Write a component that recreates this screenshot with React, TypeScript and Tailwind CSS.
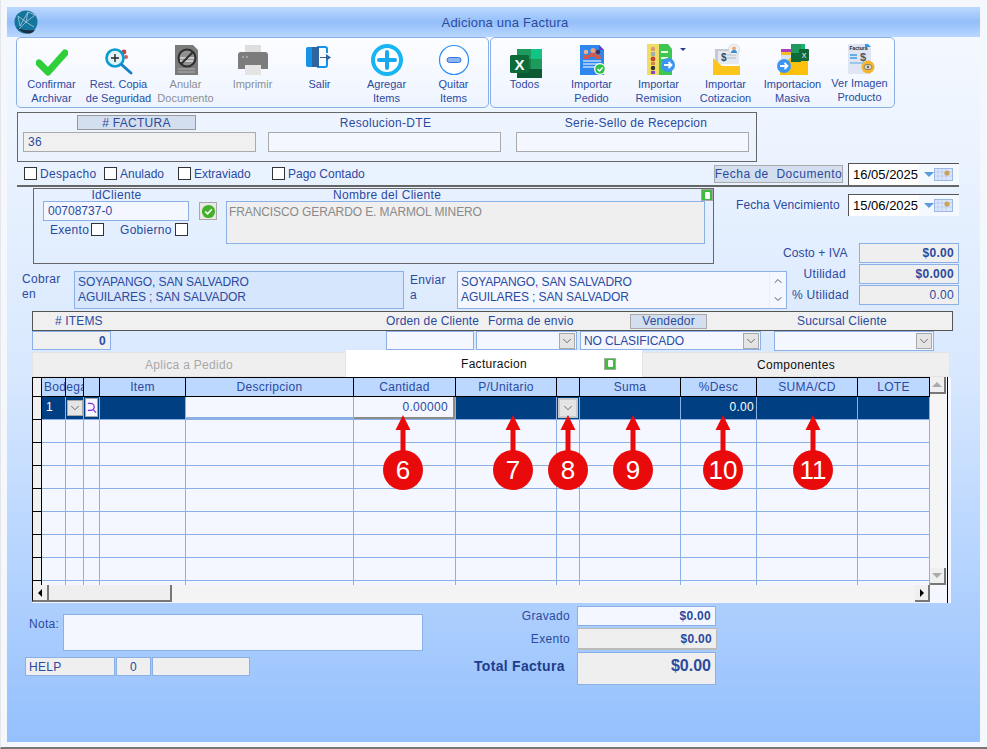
import type { ReactNode } from "react"
import { ChevronDown, ChevronUp } from "lucide-react"

const border = "border border-[#8ab0e6]"

const IconCheck = () => (
  <svg viewBox="0 0 32 32" className="h-8 w-8">
    <path d="M3 19l9 9L29 9" fill="none" stroke="#2fcf3a" strokeWidth="7" strokeLinecap="round" strokeLinejoin="round" />
  </svg>
)

const IconRestore = () => (
  <svg viewBox="0 0 32 32" className="h-8 w-8">
    <circle cx="21" cy="8" r="2.4" fill="#c2453f" />
    <circle cx="23" cy="13" r="2" fill="#e0524a" />
    <circle cx="12" cy="14" r="8.5" fill="#dff2f8" stroke="#0a9ccf" strokeWidth="2.6" />
    <path d="M12 10v8M8 14h8" stroke="#222" strokeWidth="1.4" />
    <path d="M19 21l9 8" stroke="#1180c8" strokeWidth="3" strokeLinecap="round" />
  </svg>
)

const IconVoid = () => (
  <svg viewBox="0 0 32 32" className="h-8 w-8">
    <path d="M5 1h18l5 5v25H5z" fill="#7b7b7b" />
    <path d="M8 25h17M8 28h17" stroke="#b5b5b5" strokeWidth="1" />
    <circle cx="17" cy="14" r="8.5" fill="#909090" stroke="#2e2e2e" strokeWidth="2" />
    <path d="M10 14h14M10 17h13" stroke="#dcdcdc" strokeWidth="1.6" />
    <path d="M11 20l12-12" stroke="#2e2e2e" strokeWidth="2" />
  </svg>
)

const IconPrint = () => (
  <svg viewBox="0 0 32 32" className="h-8 w-8">
    <rect x="8" y="1" width="16" height="8" fill="#dedede" />
    <path d="M1 11a3 3 0 013-3h24a3 3 0 013 3v14H1z" fill="#7c7c7c" />
    <circle cx="6" cy="13" r="1.2" fill="#a5a5a5" />
    <circle cx="10" cy="13" r="1.2" fill="#a5a5a5" />
    <rect x="8" y="21" width="16" height="10" fill="#e4e4e4" />
  </svg>
)

const IconExit = () => (
  <svg viewBox="0 0 32 32" className="h-8 w-8">
    <path d="M13 3h8a2 2 0 012 2v4M23 16v5a2 2 0 01-2 2h-8" fill="none" stroke="#1593e8" strokeWidth="2" />
    <path d="M2 5a2 2 0 012-2h9v20H4a2 2 0 01-2-2z" fill="#1593e8" />
    <path d="M8 3h7v20H8z" fill="#2f659c" />
    <path d="M16 13h6V10l5 3.500-5 3.500v-3h-6z" fill="#2f659c" />
  </svg>
)

const IconPlus = () => (
  <svg viewBox="0 0 32 32" className="h-8 w-8">
    <circle cx="16" cy="16" r="14" fill="#fff" stroke="#18b4f4" strokeWidth="4" />
    <path d="M16 8v16M8 16h16" stroke="#18a8f0" strokeWidth="4" strokeLinecap="round" />
  </svg>
)

const IconMinus = () => (
  <svg viewBox="0 0 32 32" className="h-8 w-8">
    <circle cx="16" cy="16" r="14.500" fill="#fff" stroke="#2f8ff0" strokeWidth="1.2" />
    <rect x="9" y="13.500" width="14" height="5" rx="2.500" fill="#8db6ee" stroke="#2f74d8" strokeWidth="1" />
  </svg>
)

const IconExcel = () => (
  <svg viewBox="0 0 32 34" className="h-[34px] w-8 overflow-visible">
    <path d="M8 5h14v10H8z" fill="#1e9a5c" />
    <path d="M22 5h11v10H22z" fill="#12c483" />
    <path d="M8 15h14v10H8z" fill="#117e45" />
    <path d="M22 15h11v10H22z" fill="#1e9a5c" />
    <path d="M8 25h25v9H8z" fill="#0b5a32" />
    <rect x="1" y="11" width="19" height="18" rx="1.500" fill="#0d6b3a" />
    <text x="10.500" y="26" textAnchor="middle" fontSize="15" fontWeight="700" fill="#fff" fontFamily="Liberation Sans">X</text>
  </svg>
)

const IconOrder = () => (
  <svg viewBox="0 0 32 32" className="h-8 w-8">
    <path d="M4 1h19l5 5v25H4z" fill="#2f86ee" />
    <path d="M23 1l5 5h-5z" fill="#6a3bc0" />
    <circle cx="10" cy="8" r="2.300" fill="#e8b48f" />
    <circle cx="17" cy="6.500" r="2.500" fill="#e8a27f" />
    <circle cx="22" cy="8" r="2.300" fill="#3b3560" />
    <path d="M7 15v-4h6v4zM13.500 13v-4h7v4zM19.500 15v-4h5v4z" fill="#cf5a4e" />
    <path d="M7 17h18M7 20h18M7 23h12" stroke="#bcdcff" strokeWidth="1.300" />
    <circle cx="24" cy="25" r="6" fill="#fff" />
    <circle cx="24" cy="25" r="4.800" fill="#2dc24a" />
    <path d="M21.500 25l2 2 3.200-3.500" fill="none" stroke="#fff" strokeWidth="1.500" />
  </svg>
)

const IconRemission = () => (
  <svg viewBox="0 0 32 32" className="h-8 w-8 overflow-visible">
    <rect x="4" y="0" width="12" height="31" fill="#f0dc66" />
    <path d="M16 0h9l4 5v26H16z" fill="#3ec552" />
    <circle cx="10" cy="5" r="2.200" fill="#d99a78" />
    <rect x="8" y="8" width="4" height="4" fill="#9cb2b0" />
    <circle cx="10" cy="15" r="2.400" fill="#c4453a" />
    <rect x="8" y="18" width="4" height="3" fill="#d28a3f" />
    <circle cx="10" cy="24" r="2.200" fill="#333" />
    <rect x="8" y="27" width="4" height="3" fill="#7d4cc0" />
    <path d="M18 7h7v2h-7zM18 13h7v2h-7zM18 19h4v2h-4z" fill="#eaf8e2" />
    <circle cx="25" cy="21" r="7" fill="#3a96f2" />
    <path d="M21 21h7M25.500 18l3 3-3 3" fill="none" stroke="#fff" strokeWidth="1.800" />
    <path d="M37 4h6l-3 3z" fill="#1f3d8c" />
  </svg>
)

const IconQuote = () => (
  <svg viewBox="0 0 32 32" className="h-8 w-8">
    <rect x="5" y="5" width="23" height="15" fill="#c4c9d4" />
    <rect x="8" y="7" width="21" height="13" fill="#e4e8f0" />
    <text x="11" y="17" fontSize="10" fontWeight="700" fill="#3a4a5a" fontFamily="Liberation Sans">$</text>
    <path d="M17 11h9M17 14h9" stroke="#b4bbc8" strokeWidth="1" />
    <path d="M3 14l9 8h18v9H3z" fill="#fdc41c" />
    <circle cx="24" cy="5.500" r="5.500" fill="#f2f2f2" stroke="#c9c9c9" strokeWidth=".6" />
    <circle cx="24" cy="4.500" r="2" fill="#e8a882" />
    <path d="M21 9a3 3 0 016 0z" fill="#2f8fd0" />
  </svg>
)

const IconBulk = () => (
  <svg viewBox="0 0 32 32" className="h-8 w-8">
    <rect x="4" y="5" width="14" height="3" fill="#b23ab8" />
    <rect x="4" y="8" width="14" height="3" fill="#f0c020" />
    <rect x="4" y="11" width="14" height="9" fill="#d8e2f0" />
    <path d="M3 16h8l2-2h18v17H3z" fill="#fdc00c" />
    <path d="M14 0h10v9H14z" fill="#1e9a5c" />
    <path d="M14 9h10v9H14z" fill="#0d6b3a" />
    <path d="M24 0h4v9h-4z" fill="#13b474" />
    <rect x="22" y="5" width="10" height="12" rx="1" fill="#11663a" />
    <text x="27" y="14" textAnchor="middle" fontSize="7" fill="#fff" fontFamily="Liberation Sans">X</text>
    <circle cx="7" cy="22" r="7" fill="#3a96f2" />
    <path d="M3 22h7M7.500 19l3 3-3 3" fill="none" stroke="#fff" strokeWidth="1.800" />
  </svg>
)

const IconViewer = () => (
  <svg viewBox="0 0 32 32" className="h-8 w-8">
    <path d="M4 0h19l4 4v26H4z" fill="#dfe5f2" />
    <path d="M21 0h3l3 3h-6z" fill="#2f9be8" />
    <text x="5.500" y="5.500" fontSize="5" fontWeight="700" fill="#2c2c2c" fontFamily="Liberation Sans">Factura</text>
    <path d="M6 11h7M6 14h7" stroke="#3b9bec" strokeWidth="1.600" />
    <text x="16" y="17" fontSize="11" fontWeight="700" fill="#4a5766" fontFamily="Liberation Sans">$</text>
    <path d="M6 19h14" stroke="#9cc6ee" strokeWidth="2" />
    <circle cx="24" cy="23" r="6.500" fill="#f3b62b" />
    <ellipse cx="24" cy="23" rx="4" ry="2.600" fill="#e8e2c8" stroke="#6a6a6a" strokeWidth=".8" />
    <circle cx="24" cy="23" r="1.200" fill="#5a5a5a" />
  </svg>
)

const IconGlobe = () => (
  <svg viewBox="0 0 24 24" className="h-6 w-6">
    <circle cx="12" cy="12" r="11.500" fill="#16759c" />
    <path d="M3 17c4 5 9 7 13 6.500 2-.5 4-2 5-3.500-5 .5-12 1-18-3z" fill="#1c2d3f" />
    <path d="M4 6l8 6 9-7M12 12l-7 7M12 12l8 5M4 6l2 10 8-14 7 3M14 2l-2 10" fill="none" stroke="#bcd7ea" strokeWidth=".7" />
  </svg>
)

const tools1 = [
  { icon: <IconCheck />, label: ["Confirmar", "Archivar"] },
  { icon: <IconRestore />, label: ["Rest. Copia", "de Seguridad"] },
  { icon: <IconVoid />, label: ["Anular", "Documento"], off: true },
  { icon: <IconPrint />, label: ["Imprimir"], off: true },
  { icon: <IconExit />, label: ["Salir"] },
  { icon: <IconPlus />, label: ["Agregar", "Items"] },
  { icon: <IconMinus />, label: ["Quitar", "Items"] },
]

const tools2 = [
  { icon: <IconExcel />, label: ["Todos"] },
  { icon: <IconOrder />, label: ["Importar", "Pedido"] },
  { icon: <IconRemission />, label: ["Importar", "Remision"] },
  { icon: <IconQuote />, label: ["Importar", "Cotizacion"] },
  { icon: <IconBulk />, label: ["Importacion", "Masiva"] },
  { icon: <IconViewer />, label: ["Ver Imagen", "Producto"], up: true },
]

function ToolButton({ icon, label, off, up }: { icon: ReactNode; label: string[]; off?: boolean; up?: boolean }) {
  return (
    <div className="flex w-[67px] shrink-0 flex-col items-center">
      <div className="flex h-8 w-8 items-start justify-center">{icon}</div>
      <div className={`whitespace-nowrap text-center text-[11px] leading-[14px] ${up ? "mt-0" : "mt-[1px]"} ${off ? "text-[#8a8f96]" : "text-[#2b4a9e]"}`}>
        {label.map((l) => (
          <div key={l}>{l}</div>
        ))}
      </div>
    </div>
  )
}

function Check({ className = "" }: { className?: string }) {
  return <span className={`block h-[13px] w-[13px] shrink-0 border border-[#333] bg-white ${className}`} />
}

function DateBox({ value }: { value: string }) {
  return (
    <div className="flex h-[22px] w-[111px] shrink-0 items-center border-l border-t border-[#555] bg-white pl-[4px] tracking-normal">
      <span className="mt-[1px] w-[66px] text-[13px] text-black">{value}</span>
      <div className="flex h-full flex-1 items-center bg-[#f4f8ff] pl-[5px]">
        <span className="h-0 w-0 border-x-[5px] border-t-[5px] border-x-transparent border-t-[#5b9be0]" />
        <svg viewBox="0 0 19 13" className="h-[13px] w-[19px]">
          <rect x=".5" y=".5" width="18" height="12" fill="#dbe6fb" stroke="#9db8e8" />
          <path d="M4 1v11M8 1v11M12 1v11M1 4h17M1 8h17" stroke="#b4c6ee" strokeWidth=".7" />
          <circle cx="13" cy="5" r="2.600" fill="#c9a35a" />
        </svg>
      </div>
    </div>
  )
}

function SelectButton({ className = "" }: { className?: string }) {
  return (
    <span className={`flex h-[16px] w-[16px] items-center justify-center border border-[#a8a8a8] bg-[#e4e4e4] ${className}`}>
      <ChevronDown size={14} strokeWidth={1.25} className="text-[#444]" />
    </span>
  )
}

function GreenTag({ className = "" }: { className?: string }) {
  return (
    <span className={`flex h-[12px] w-[12px] items-center justify-center border border-[#a8a8a8] bg-[#3fbb3f] ${className}`}>
      <span className="block h-[7px] w-[5px] rounded-[1px] bg-white" />
    </span>
  )
}

const columns = [
  { w: "w-[24px]", title: "" },
  { w: "w-[18px]", title: "" },
  { w: "w-[16px]", title: "" },
  { w: "w-[86px]", title: "Item" },
  { w: "w-[168px]", title: "Descripcion" },
  { w: "w-[102px]", title: "Cantidad" },
  { w: "w-[101px]", title: "P/Unitario" },
  { w: "w-[23px]", title: "" },
  { w: "w-[101px]", title: "Suma" },
  { w: "w-[76px]", title: "%Desc" },
  { w: "w-[101px]", title: "SUMA/CD" },
  { w: "w-[72px]", title: "LOTE" },
]

const emptyRows = [1, 2, 3, 4, 5, 6, 7, 8]

const markers = [
  { n: "6", pos: "left-[351px]" },
  { n: "7", pos: "left-[461px]" },
  { n: "8", pos: "left-[516px]" },
  { n: "9", pos: "left-[581px]" },
  { n: "10", pos: "left-[671px]" },
  { n: "11", pos: "left-[761px]" },
]

function Marker({ n, pos }: { n: string; pos: string }) {
  return (
    <div className={`absolute top-[38px] z-20 flex w-10 flex-col items-center ${pos}`}>
      <svg viewBox="0 0 16 36" className="h-9 w-4">
        <path d="M8 0l7.500 15H10.500v21h-5V15H.5z" fill="#e90b0b" />
      </svg>
      <span className="-mt-px flex h-10 w-10 items-center justify-center rounded-full bg-[#e90b0b] text-[26px] tracking-normal text-white">{n}</span>
    </div>
  )
}

function selectedCell(i: number) {
  if (i === 0) return <span className="pl-[4px] text-white">1</span>
  if (i === 1)
    return (
      <div className="flex h-full items-center justify-center">
        <SelectButton />
      </div>
    )
  if (i === 2)
    return (
      <div className="m-[1px] flex h-[19px] w-[13px] items-center justify-center border border-[#a8a8a8] bg-[#f4f7ff]">
        <svg viewBox="0 0 12 16" className="h-4 w-3">
          <path d="M2 3h3a4 4 0 014 4c0 2-1 3-3 3.500H2" fill="none" stroke="#8a2be2" strokeWidth="1.300" />
          <path d="M8 10l3 3" stroke="#8a2be2" strokeWidth="1.300" />
        </svg>
      </div>
    )
  if (i === 4) return <div className="h-full w-full border-b-2 border-[#8ab0e6] bg-[#f4f7ff]" />
  if (i === 5)
    return (
      <div className="flex h-[22px] items-center justify-end border-b-2 border-r-2 border-[#8b8b8b] border-l-[#e0e0e0] bg-[#f4f7ff] pr-[5px] text-[#2b4a9e]">
        0.00000
      </div>
    )
  if (i === 7)
    return (
      <div className="flex h-full items-center justify-center">
        <SelectButton className="h-[20px] w-[20px] border-2 border-[#c9c9c9]" />
      </div>
    )
  if (i === 9) return <div className="pr-[2px] text-right text-white">0.00</div>
  return null
}

export default function App() {
  return (
    <div className="h-[749px] w-[987px] overflow-hidden border-b-2 border-l border-b-[#777] border-l-[#e4e6ea] bg-[#f4f8fc] pl-[6px] pt-[7px] font-['Liberation_Sans',sans-serif] text-[12px] tracking-[0.3px] text-[#2b4a9e]">
      <div className="h-[735px] w-[973px] bg-gradient-to-b from-[#f7faff] via-[#d8e8fe] to-[#94c0fd]">
        {/* Title bar */}
        <div className="relative flex h-[30px] items-center justify-center bg-gradient-to-b from-[#bcd8ff] via-[#93bffa] to-[#b9d6ff] text-[13px] tracking-[0.2px]">
          <span className="absolute left-[7px] top-[3px]">
            <IconGlobe />
          </span>
          <span className="ml-[23px] mt-[1px]">Adiciona una Factura</span>
        </div>

        {/* Toolbar */}
        <div className="ml-[9px] flex h-[71px] tracking-normal">
          <div className={`flex w-[473px] rounded-[5px] ${border} bg-gradient-to-b from-[#fcfdff] to-[#eef4ff] pl-[1px] pt-[6px]`}>
            {tools1.map((t) => (
              <ToolButton key={t.label[0]} {...t} />
            ))}
          </div>
          <div className={`ml-[1px] flex w-[405px] rounded-[5px] ${border} bg-gradient-to-b from-[#fcfdff] to-[#eef4ff] pt-[6px]`}>
            {tools2.map((t) => (
              <ToolButton key={t.label[1] ?? t.label[0]} {...t} />
            ))}
          </div>
        </div>

        {/* Factura */}
        <div className="ml-[10px] mt-[4px] flex h-[50px] w-[740px] gap-[12px] border border-[#666] pl-[5px] pt-[2px]">
          <div className="w-[233px]">
            <div className="ml-[54px] flex h-[15px] w-[119px] items-center justify-center border border-[#999] bg-[#d3dfee]"># FACTURA</div>
            <div className="mt-[2px] flex h-[20px] items-center border border-[#aaa] bg-[#f0f0f0] pl-[4px]">36</div>
          </div>
          <div className="w-[233px]">
            <div className="flex h-[15px] items-center justify-center pl-[2px]">Resolucion-DTE</div>
            <div className="mt-[2px] h-[20px] border border-[#aaa] bg-[#f4f7ff]" />
          </div>
          <div className="ml-[3px] w-[233px]">
            <div className="flex h-[15px] items-center justify-center pl-[7px]">Serie-Sello de Recepcion</div>
            <div className="mt-[2px] h-[20px] border border-[#aaa] bg-[#f4f7ff]" />
          </div>
        </div>

        {/* Checks + fecha */}
        <div className="ml-[17px] flex h-[23px] w-[935px] items-center">
          <Check />
          <span className="ml-[3px] w-[64px]">Despacho</span>
          <Check />
          <span className="ml-[3px] w-[58px] tracking-normal">Anulado</span>
          <Check />
          <span className="ml-[3px] w-[78px] tracking-normal">Extraviado</span>
          <Check />
          <span className="ml-[3px] tracking-normal">Pago Contado</span>
          <span className="ml-auto mr-[5px] flex h-[18px] w-[129px] items-center justify-center whitespace-nowrap border border-[#aaa] bg-[#d3dfee] tracking-[0.5px]">Fecha de&nbsp; Documento</span>
          <DateBox value="16/05/2025" />
        </div>
        <div className="ml-[10px] h-[2px] w-[942px] bg-[#666]" />

        {/* Cliente + totales */}
        <div className="flex h-[124px]">
          <div className="ml-[15px] w-[765px]">
            <div className="relative ml-[11px] mt-[1px] flex h-[76px] w-[681px] border border-[#666] pl-[9px]">
              <div className="w-[146px]">
                <div className="flex h-[12px] items-center justify-center pl-[1px]">IdCliente</div>
                <div className={`flex h-[20px] items-center pl-[4px] tracking-normal ${border} bg-[#f4f7ff]`}>00708737-0</div>
                <div className="mt-[2px] flex h-[13px] items-center">
                  <span className="ml-[7px] w-[41px]">Exento</span>
                  <Check />
                  <span className="ml-[16px] w-[55px]">Gobierno</span>
                  <Check />
                </div>
              </div>
              <div className="ml-[10px] mt-[13px] flex h-[18px] w-[18px] items-center justify-center border border-[#a8a8a8] bg-[#e8e8e8]">
                <svg viewBox="0 0 16 16" className="h-[15px] w-[15px]">
                  <circle cx="8" cy="8" r="7" fill="#43b02a" />
                  <path d="M4.500 8l2.500 2.500 4.500-5" fill="none" stroke="#fff" strokeWidth="1.600" />
                </svg>
              </div>
              <div className="ml-[9px] w-[479px]">
                <div className="flex h-[12px] items-center pl-[107px]">Nombre del Cliente</div>
                <div className={`h-[43px] pl-[2px] pt-[1px] tracking-[-0.1px] text-[#8a8a8a] ${border} bg-[#efefef]`}>FRANCISCO GERARDO E. MARMOL MINERO</div>
              </div>
              <GreenTag className="absolute right-0 top-0" />
            </div>
            <div className="mt-[7px] flex h-[38px]">
              <div className="w-[52px] pt-[1px] leading-[15px]">
                Cobrar
                <br />
                en
              </div>
              <div className={`h-[38px] w-[330px] pl-[3px] pt-[3px] leading-[15px] tracking-[-0.1px] ${border} bg-[#d6e6fd]`}>
                SOYAPANGO, SAN SALVADRO
                <br />
                AGUILARES ; SAN SALVADOR
              </div>
              <div className="ml-[6px] w-[47px] pt-[2px] leading-[15px]">
                Enviar
                <br />a
              </div>
              <div className={`flex h-[38px] w-[330px] tracking-[-0.1px] ${border} bg-[#f4f7ff]`}>
                <div className="flex-1 pl-[3px] pt-[3px] leading-[15px]">
                  SOYAPANGO, SAN SALVADRO
                  <br />
                  AGUILARES ; SAN SALVADOR
                </div>
                <div className="flex w-[17px] flex-col items-center justify-between border-l border-[#e8eef8] py-[3px] text-[#555]">
                  <ChevronUp size={12} strokeWidth={2} />
                  <ChevronDown size={12} strokeWidth={2} />
                </div>
              </div>
            </div>
          </div>
          <div className="w-[172px]">
            <div className="ml-[-51px] mt-[7px] flex items-center">
              <span className="w-[112px] shrink-0 whitespace-nowrap tracking-[0.1px]">Fecha Vencimiento</span>
              <DateBox value="15/06/2025" />
            </div>
            <div className="ml-[-4px] mt-[26px] flex h-[21px] items-center">
              <span className="w-[62px] whitespace-nowrap text-right tracking-[0.1px]">Costo + IVA</span>
              <div className={`ml-[14px] flex h-[20px] w-[100px] items-center justify-end pr-[4px] font-bold ${border} bg-[#efefef]`}>$0.00</div>
            </div>
            <div className="flex h-[21px] items-center">
              <span className="w-[59px] text-right">Utilidad</span>
              <div className={`ml-[13px] flex h-[20px] w-[100px] items-center justify-end pr-[4px] font-bold ${border} bg-[#efefef]`}>$0.000</div>
            </div>
            <div className="flex h-[21px] items-center">
              <span className="w-[62px] whitespace-nowrap text-right">% Utilidad</span>
              <div className={`ml-[10px] flex h-[20px] w-[100px] items-center justify-end pr-[4px] ${border} bg-[#efefef]`}>0.00</div>
            </div>
          </div>
        </div>

        {/* Cabecera items */}
        <div className="ml-[25px] flex h-[20px] w-[921px] items-center border border-[#555] bg-[#f0f0f0] tracking-[0.15px]">
          <span className="ml-[22px] w-[331px]"># ITEMS</span>
          <span className="w-[102px] whitespace-nowrap">Orden de Cliente</span>
          <span className="w-[142px] whitespace-nowrap">Forma de envio</span>
          <span className="flex h-[15px] w-[77px] items-center justify-center border border-[#aaa] bg-[#d3dfee]">Vendedor</span>
          <span className="ml-[90px] whitespace-nowrap">Sucursal Cliente</span>
        </div>
        <div className="ml-[25px] flex h-[19px]">
          <div className={`flex w-[79px] items-center justify-end pr-[4px] font-bold ${border} bg-[#f0f0f0]`}>0</div>
          <div className={`ml-[275px] w-[88px] ${border} bg-[#f4f7ff]`} />
          <div className={`ml-[2px] flex w-[101px] items-center justify-end pr-[1px] ${border} bg-[#f4f7ff]`}>
            <SelectButton />
          </div>
          <div className={`ml-[3px] flex w-[181px] items-center justify-between pl-[3px] pr-[1px] tracking-[-0.1px] ${border} bg-[#f4f7ff]`}>
            NO CLASIFICADO
            <SelectButton />
          </div>
          <div className={`ml-[13px] flex h-[20px] w-[160px] items-center justify-end pr-[1px] ${border} bg-[#f4f7ff]`}>
            <SelectButton />
          </div>
        </div>

        {/* Tabs */}
        <div className="ml-[25px] flex h-[27px] items-end">
          <div className="flex h-[25px] w-[314px] items-center justify-center border border-[#e4e4e4] bg-[#efefef] text-[#a8a8a8]">Aplica a Pedido</div>
          <div className="flex h-[27px] w-[296px] items-center bg-white text-[#111]">
            <span className="ml-[115px] w-[143px]">Facturacion</span>
            <GreenTag />
          </div>
          <div className="flex h-[25px] w-[308px] items-center justify-center border border-[#e4e4e4] bg-[#efefef] text-[#111]">Componentes</div>
        </div>

        {/* Tabla */}
        <div className="relative ml-[25px] h-[226px] w-[919px] bg-[#f4f7ff]">
          <div className="flex h-[208px] w-[916px] border-r border-black">
            <div className="w-[898px] overflow-hidden">
              <div className="flex h-[20px] border-t border-black">
                <div className="w-[10px] shrink-0 border-x border-b border-black bg-[#f0f0f0]" />
                {columns.map((c, i) => (
                  <div key={i} className={`${c.w} flex shrink-0 items-center border-b border-r border-black bg-[#bcd8ff] ${i === 0 ? "justify-start" : "justify-center"}`}>
                    {c.title}
                    {i === 0 && <span className="relative z-10 ml-[2px] w-[39px] shrink-0 overflow-hidden">Bodega</span>}
                  </div>
                ))}
              </div>
              <div className="flex h-[23px]">
                <div className="w-[10px] shrink-0 border-x border-b border-black bg-[#f0f0f0]" />
                {columns.map((c, i) => (
                  <div key={i} className={`${c.w} shrink-0 border-b border-r border-[#8ab0e6] bg-[#003f82] leading-[21px]`}>
                    {selectedCell(i)}
                  </div>
                ))}
              </div>
              {emptyRows.map((r) => (
                <div key={r} className="flex h-[23px]">
                  <div className="w-[10px] shrink-0 border-x border-b border-black bg-[#f0f0f0]" />
                  {columns.map((c, i) => (
                    <div key={i} className={`${c.w} shrink-0 border-b border-r border-[#8ab0e6]`} />
                  ))}
                </div>
              ))}
            </div>
            <div className="flex w-[16px] flex-col justify-between bg-[#f5f5f5]">
              <div className="flex h-[17px] items-center justify-center border-b-2 border-r-2 border-[#777] bg-[#efefef]">
                <span className="h-0 w-0 border-x-[5px] border-b-[5px] border-x-transparent border-b-[#aaa]" />
              </div>
              <div className="flex h-[17px] items-center justify-center border-b-2 border-r-2 border-[#777] bg-[#efefef]">
                <span className="h-0 w-0 border-x-[5px] border-t-[5px] border-x-transparent border-t-[#aaa]" />
              </div>
            </div>
          </div>
          <div className="flex h-[18px] w-[916px] border-r border-black">
            <div className="flex h-[17px] w-[17px] items-center justify-center border-b-2 border-l border-r-2 border-black border-b-[#777] border-r-[#777] bg-[#efefef]">
              <span className="h-0 w-0 border-y-[4px] border-r-[4px] border-y-transparent border-r-black" />
            </div>
            <div className="h-[17px] w-[123px] border-b-2 border-r-2 border-[#777] bg-[#efefef]" />
            <div className="h-[17px] w-[743px] bg-[#f4f4f4]" />
            <div className="flex h-[17px] w-[15px] items-center justify-center border-b-2 border-r-2 border-[#777] bg-[#efefef]">
              <span className="h-0 w-0 border-y-[4px] border-l-[4px] border-y-transparent border-l-black" />
            </div>
          </div>
          {markers.map((m) => (
            <Marker key={m.n} {...m} />
          ))}
        </div>

        {/* Pie */}
        <div className="ml-[18px] mt-[3px] flex">
          <div className="w-[398px]">
            <div className="mt-[8px] flex h-[37px]">
              <span className="ml-[4px] w-[34px] pt-[1px]">Nota:</span>
              <div className={`w-[360px] ${border} bg-[#f4f7ff]`} />
            </div>
            <div className="mt-[6px] flex h-[19px] gap-px">
              <div className={`flex w-[90px] items-center pl-[3px] ${border} bg-[#efefef]`}>HELP</div>
              <div className={`flex w-[35px] items-center justify-center ${border} bg-[#efefef]`}>0</div>
              <div className={`w-[98px] ${border} bg-[#efefef]`} />
            </div>
          </div>
          <div className="ml-[50px]">
            <div className="flex h-[20px] items-center">
              <span className="w-[97px] text-right">Gravado</span>
              <div className={`ml-[7px] flex h-[20px] w-[139px] items-center justify-end pr-[4px] font-bold ${border} bg-[#f4f7ff]`}>$0.00</div>
            </div>
            <div className="mt-[2px] flex h-[22px] items-center">
              <span className="w-[97px] text-right">Exento</span>
              <div className="ml-[7px] flex h-[22px] w-[140px] items-center justify-end border border-b-2 border-[#bbb] bg-[#efefef] pr-[4px] font-bold">$0.00</div>
            </div>
            <div className="mt-[2px] flex h-[33px]">
              <span className="ml-[1px] w-[96px] whitespace-nowrap pt-[4px] text-[14px] font-bold tracking-[0.3px] text-[#1f3d8c]">Total Factura</span>
              <div className={`ml-[7px] h-[33px] w-[139px] pr-[4px] pt-[1px] text-right text-[16px] font-bold tracking-normal ${border} bg-[#efefef]`}>$0.00</div>
            </div>
          </div>
        </div>
      </div>
    </div>
  )
}
